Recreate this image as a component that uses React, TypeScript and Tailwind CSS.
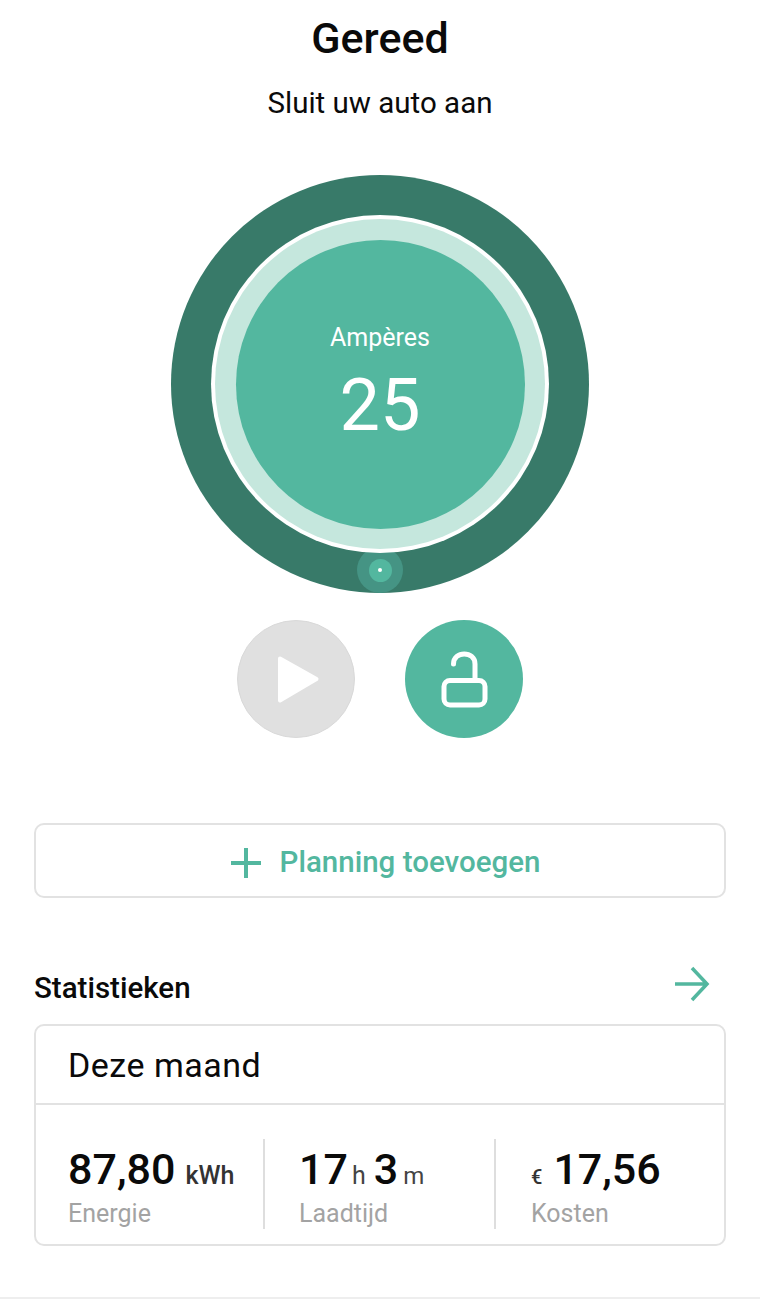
export default function App() {
  return (
    <div className="w-[760px] h-[1300px] bg-white overflow-hidden flex flex-col items-center font-['Roboto',sans-serif] text-[#0a0a0a]">
      <h1 className="mt-[14px] h-[48px] text-[43px] leading-[48px] font-medium">Gereed</h1>
      <p className="mt-[17px] h-[48px] text-[29.5px] leading-[48px]">Sluit uw auto aan</p>
      <div className="relative mt-[48px] w-[418px] h-[418px] rounded-full bg-[#387a69] flex items-center justify-center">
        <div className="absolute left-[186px] bottom-0 w-[46px] h-[46px] rounded-full bg-[#459484] flex items-center justify-center">
          <div className="w-[23px] h-[23px] rounded-full bg-[#53b79f] flex items-center justify-center">
            <div className="w-[4px] h-[4px] rounded-full bg-white" />
          </div>
        </div>
        <div className="relative w-[338px] h-[338px] rounded-full bg-white flex items-center justify-center">
          <div className="w-[330px] h-[330px] rounded-full bg-[#c5e7dd] flex items-center justify-center">
            <div className="w-[289px] h-[289px] rounded-full bg-[#53b79f] flex flex-col items-center text-white">
              <span className="mt-[82px] text-[25px] leading-[32px]">Ampères</span>
              <span className="mt-[12px] text-[72px] leading-[80px]">25</span>
            </div>
          </div>
        </div>
      </div>
      <div className="mt-[27px] flex gap-[50px]">
        <button className="w-[118px] h-[118px] rounded-full bg-[#e0e0e0] border border-[#d9d9d9] flex items-center justify-center">
          <svg width="116" height="116" viewBox="1 1 116 116">
            <path d="M43 38.5 L79.5 59 L43 80.5 Z" fill="#fff" stroke="#fff" strokeWidth="4" strokeLinejoin="round" />
          </svg>
        </button>
        <button className="w-[118px] h-[118px] rounded-full bg-[#53b79f] flex items-center justify-center">
          <svg width="118" height="118" viewBox="0 0 118 118" fill="none" stroke="#fff" strokeWidth="5" strokeLinecap="round">
            <rect x="39" y="60.5" width="41" height="24.5" rx="6" />
            <path d="M48.5 44 C48.5 30.5 70 30.5 70 44 V60" />
          </svg>
        </button>
      </div>
      <button className="mt-[85px] w-[692px] h-[75px] pt-[4px] pl-[10px] rounded-[10px] border-2 border-[#e2e2e2] flex items-center justify-center gap-[18px] text-[#53b79f] text-[29.5px] font-medium">
        <svg width="32" height="32" viewBox="0 0 32 32" stroke="#53b79f" strokeWidth="4">
          <path d="M1 16 H31 M16 1 V31" />
        </svg>
        <span>Planning toevoegen</span>
      </button>
      <div className="mt-[62px] w-[692px] h-[48px] flex items-center justify-between">
        <span className="mt-[8px] text-[29.5px] font-medium">Statistieken</span>
        <svg className="mr-[16px]" width="36" height="36" viewBox="0 0 36 36" fill="none" stroke="#53b79f" strokeWidth="3.5">
          <path d="M1 18 H33 M18 2 L33 18 L18 34" />
        </svg>
      </div>
      <div className="mt-[16px] w-[692px] h-[222px] rounded-[10px] border-2 border-[#e2e2e2] flex flex-col">
        <div className="h-[79px] pt-[2px] border-b-2 border-[#e2e2e2] pl-[32px] flex items-center text-[34px] tracking-[0.5px]">Deze maand</div>
        <div className="flex items-start pt-[34px] h-[139px]">
          <div className="w-[229px] pl-[32px] h-[90px] border-r-2 border-[#dedede]">
            <div className="pt-[2px] h-[57px] flex items-baseline">
              <span className="text-[43px] leading-[56px] font-medium">87,80</span>
              <span className="ml-[10px] text-[25px] font-medium text-[#333]">kWh</span>
            </div>
            <div className="text-[25px] leading-[36px] text-[#a3a3a3]">Energie</div>
          </div>
          <div className="w-[231px] pl-[34px] h-[90px] border-r-2 border-[#dedede]">
            <div className="pt-[2px] h-[57px] flex items-baseline">
              <span className="text-[43px] leading-[56px] font-medium">17</span>
              <span className="ml-[4px] text-[25px] text-[#444]">h</span>
              <span className="ml-[8px] text-[43px] leading-[56px] font-medium">3</span>
              <span className="ml-[5px] text-[24px] text-[#444]">m</span>
            </div>
            <div className="text-[25px] leading-[36px] text-[#a3a3a3]">Laadtijd</div>
          </div>
          <div className="flex-1 pl-[35px] h-[90px]">
            <div className="pt-[2px] h-[57px] flex items-baseline">
              <span className="text-[20px] font-medium text-[#333]">€</span>
              <span className="ml-[11px] text-[43px] leading-[56px] font-medium">17,56</span>
            </div>
            <div className="text-[25px] leading-[36px] text-[#a3a3a3]">Kosten</div>
          </div>
        </div>
      </div>
      <div className="mt-[51px] w-full h-[2px] bg-[#eeeeee]" />
    </div>
  );
}
